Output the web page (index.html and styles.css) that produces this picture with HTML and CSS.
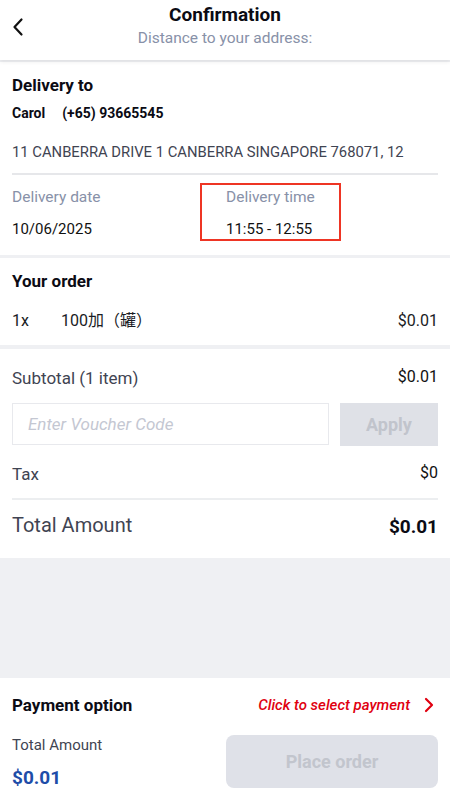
FILE: index.html
```html
<!DOCTYPE html>
<html>
<head>
<meta charset="utf-8">
<link rel="stylesheet" href="styles.css">
</head>
<body>
<div class="page">
  <header class="header">
    <svg class="back" width="14" height="20" viewBox="0 0 14 20"><path d="M10.5 2.5 L3.5 10 L10.5 17.5" fill="none" stroke="#111" stroke-width="2.2" stroke-linecap="round" stroke-linejoin="round"/></svg>
    <div class="title">Confirmation</div>
    <div class="subtitle">Distance to your address:</div>
  </header>

  <section class="card delivery">
    <div class="h">Delivery to</div>
    <div class="contact"><span>Carol</span><span class="phone">(+65) 93665545</span></div>
    <div class="address">11 CANBERRA DRIVE 1 CANBERRA SINGAPORE 768071, 12</div>
    <div class="dates">
      <div class="col">
        <div class="lbl">Delivery date</div>
        <div class="val">10/06/2025</div>
      </div>
      <div class="col time">
        <div class="lbl">Delivery time</div>
        <div class="val">11:55 - 12:55</div>
      </div>
    </div>
  </section>

  <section class="card order">
    <div class="h">Your order</div>
    <div class="item"><span class="qty">1x</span><span class="name">100加（罐）</span><span class="price">$0.01</span></div>
  </section>

  <section class="card summary">
    <div class="row sub"><span>Subtotal (1 item)</span><span class="amt">$0.01</span></div>
    <div class="voucher">
      <input class="vinput" placeholder="Enter Voucher Code">
      <button class="apply">Apply</button>
    </div>
    <div class="row tax"><span>Tax</span><span class="amt">$0</span></div>
    <div class="row total"><span>Total Amount</span><span class="tamt">$0.01</span></div>
  </section>

  <div class="spacer"></div>

  <footer class="footer">
    <div class="pay">
      <span class="ph">Payment option</span>
      <span class="select">Click to select payment
        <svg width="10" height="16" viewBox="0 0 10 16"><path d="M2 2 L8 8 L2 14" fill="none" stroke="#e00010" stroke-width="2.2" stroke-linecap="round" stroke-linejoin="round"/></svg>
      </span>
    </div>
    <div class="bottom">
      <div class="tot">
        <div class="tl">Total Amount</div>
        <div class="tv">$0.01</div>
      </div>
      <button class="place">Place order</button>
    </div>
  </footer>
</div>
</body>
</html>
```
FILE: styles.css
```css
* { box-sizing: border-box; }
html, body { margin: 0; padding: 0; }
body { font-family: Roboto, "Noto Sans CJK SC", sans-serif; background: #eff0f3; color: #111; }
.page { width: 450px; height: 793px; display: flex; flex-direction: column; }
.header { position: relative; background: #fff; height: 60px; text-align: center; box-shadow: 0 2px 4px rgba(0,0,0,0.07); z-index: 1; padding-top: 4px; }
.back { position: absolute; left: 11px; top: 17px; }
.title { font-size: 19px; font-weight: 700; line-height: 22px; color: #0b0b14; }
.subtitle { font-size: 15.5px; color: #8891a8; line-height: 18px; margin-top: 3px; }
.card { background: #fff; padding: 0 12px; }
.delivery { margin-top: 2px; padding-top: 13px; padding-bottom: 14px; }
.h { font-size: 17px; font-weight: 700; line-height: 20px; color: #0b0b14; }
.contact { font-size: 14px; font-weight: 700; margin-top: 9px; line-height: 18px; color: #0b0b14; }
.contact .phone { margin-left: 17px; }
.address { font-size: 14.8px; color: #3f4452; margin-top: 21px; line-height: 18px; padding-bottom: 12px; border-bottom: 2px solid #e6e7ea; white-space: nowrap; }
.dates { display: flex; margin-top: 8px; }
.col { width: 188px; padding-top: 5px; }
.col .lbl { font-size: 15.5px; color: #8891a8; line-height: 18px; }
.col .val { font-size: 15px; color: #111; line-height: 18px; margin-top: 14px; }
.col.time { width: 141px; border: 2px solid #ee3524; padding: 3px 0 0 24px; height: 58px; }
.order { margin-top: 3px; padding-top: 13px; padding-bottom: 14px; }
.item { display: flex; font-size: 16px; margin-top: 20px; line-height: 20px; color: #1a1c24; }
.item .qty { width: 49px; }
.item .name { flex: 1; }
.summary { margin-top: 4px; padding-top: 19px; padding-bottom: 20px; }
.row { display: flex; justify-content: space-between; align-items: flex-start; color: #3f4452; font-size: 17px; line-height: 20px; }
.row .amt { color: #111; font-size: 16px; margin-top: -1px; }
.voucher { display: flex; margin-top: 15px; gap: 11px; }
.vinput { flex: 0 0 317px; height: 42px; border: 1px solid #e8e9ed; font-family: Roboto, sans-serif; font-size: 17px; padding: 0 15px; font-style: italic; outline: none; }
.vinput::placeholder { color: #c4c7d2; font-style: italic; }
.apply { flex: 1; height: 43px; background: #dfe1e7; border: none; color: #c1c4cc; font-family: Roboto, sans-serif; font-size: 18px; font-weight: 700; }
.tax { margin-top: 18px; padding-bottom: 14px; border-bottom: 2px solid #eceef0; }
.total { margin-top: 14px; font-size: 20px; line-height: 22px; }
.tamt { font-weight: 700; color: #0b0b14; font-size: 19px; margin-top: 2px; }
.spacer { flex: 1; }
.footer { background: #fff; height: 115px; padding: 17px 12px 0; }
.pay { display: flex; justify-content: space-between; align-items: center; height: 20px; }
.ph { font-size: 17px; font-weight: 700; color: #0b0b14; }
.select { color: #e00010; font-style: italic; font-weight: 500; font-size: 15px; display: flex; align-items: center; gap: 14px; margin-right: 4px; }
.bottom { display: flex; justify-content: space-between; margin-top: 20px; }
.tl { font-size: 15px; color: #3f4452; margin-top: 1px; line-height: 18px; }
.tv { font-size: 19px; font-weight: 700; color: #1e4da8; margin-top: 13px; line-height: 22px; }
.place { width: 212px; height: 53px; border-radius: 8px; border: none; background: #dfe1e8; color: #c2c5cd; font-family: Roboto, sans-serif; font-size: 18px; font-weight: 700; }
```
